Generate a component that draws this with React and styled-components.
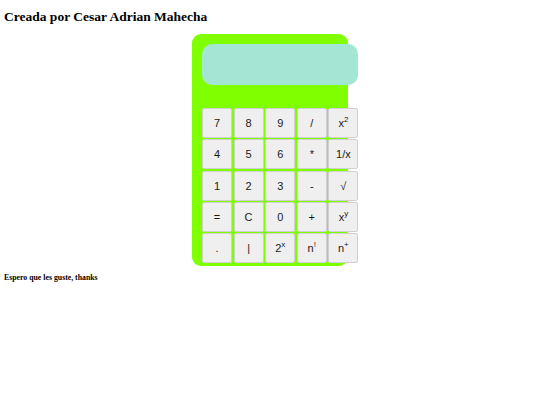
import React from "react";
import styled, { createGlobalStyle } from "styled-components";

const GlobalStyle = createGlobalStyle`
  body {
    margin: 0;
    padding: 0 4px;
    background: #ffffff;
    font-family: "Liberation Serif", "Times New Roman", serif;
  }
`;

const Title = styled.h1`
  margin: 9px 0 9px;
  font-size: 13.5px;
  line-height: 16px;
  font-weight: bold;
  color: #000;
`;

const Calculator = styled.div`
  width: 136px;
  margin: 0 auto;
  padding: 10px 10px 3px;
  background: #7fff00;
  border-radius: 9px;
  box-sizing: content-box;
`;

const Display = styled.div`
  width: 156px;
  height: 41px;
  background: #a2e6d3;
  border-radius: 10px;
  margin-bottom: 23px;
`;

const Keys = styled.div`
  display: grid;
  grid-template-columns: repeat(5, 30px);
  grid-auto-rows: 30px;
  column-gap: 1.6px;
  row-gap: 1.3px;
  width: 158px;
`;

const Key = styled.button`
  margin: 0;
  padding: 0;
  width: 30px;
  height: 30px;
  background: #efefef;
  border: 1px solid #d0d0d0;
  border-radius: 2px;
  font-family: "Liberation Sans", Arial, sans-serif;
  font-size: 11px;
  color: #1a1a1a;
  display: flex;
  align-items: center;
  justify-content: center;

  sup {
    font-size: 8px;
    position: relative;
    top: -3px;
    vertical-align: top;
    line-height: 1;
  }
`;

const Footer = styled.p`
  margin: 7px 0 0;
  font-size: 7.8px;
  font-weight: bold;
  color: #000;
`;

const keys = [
  "7", "8", "9", "/", ["x", "2"],
  "4", "5", "6", "*", "1/x",
  "1", "2", "3", "-", "√",
  "=", "C", "0", "+", ["x", "y"],
  ".", "|", ["2", "x"], ["n", "!"], ["n", "+"],
];

export default function App() {
  return (
    <>
      <GlobalStyle />
      <Title>Creada por Cesar Adrian Mahecha</Title>
      <Calculator>
        <Display />
        <Keys>
          {keys.map((k, i) => (
            <Key key={i}>
              {Array.isArray(k) ? (
                <>
                  {k[0]}
                  <sup>{k[1]}</sup>
                </>
              ) : (
                k
              )}
            </Key>
          ))}
        </Keys>
      </Calculator>
      <Footer>Espero que les guste, thanks</Footer>
    </>
  );
}
